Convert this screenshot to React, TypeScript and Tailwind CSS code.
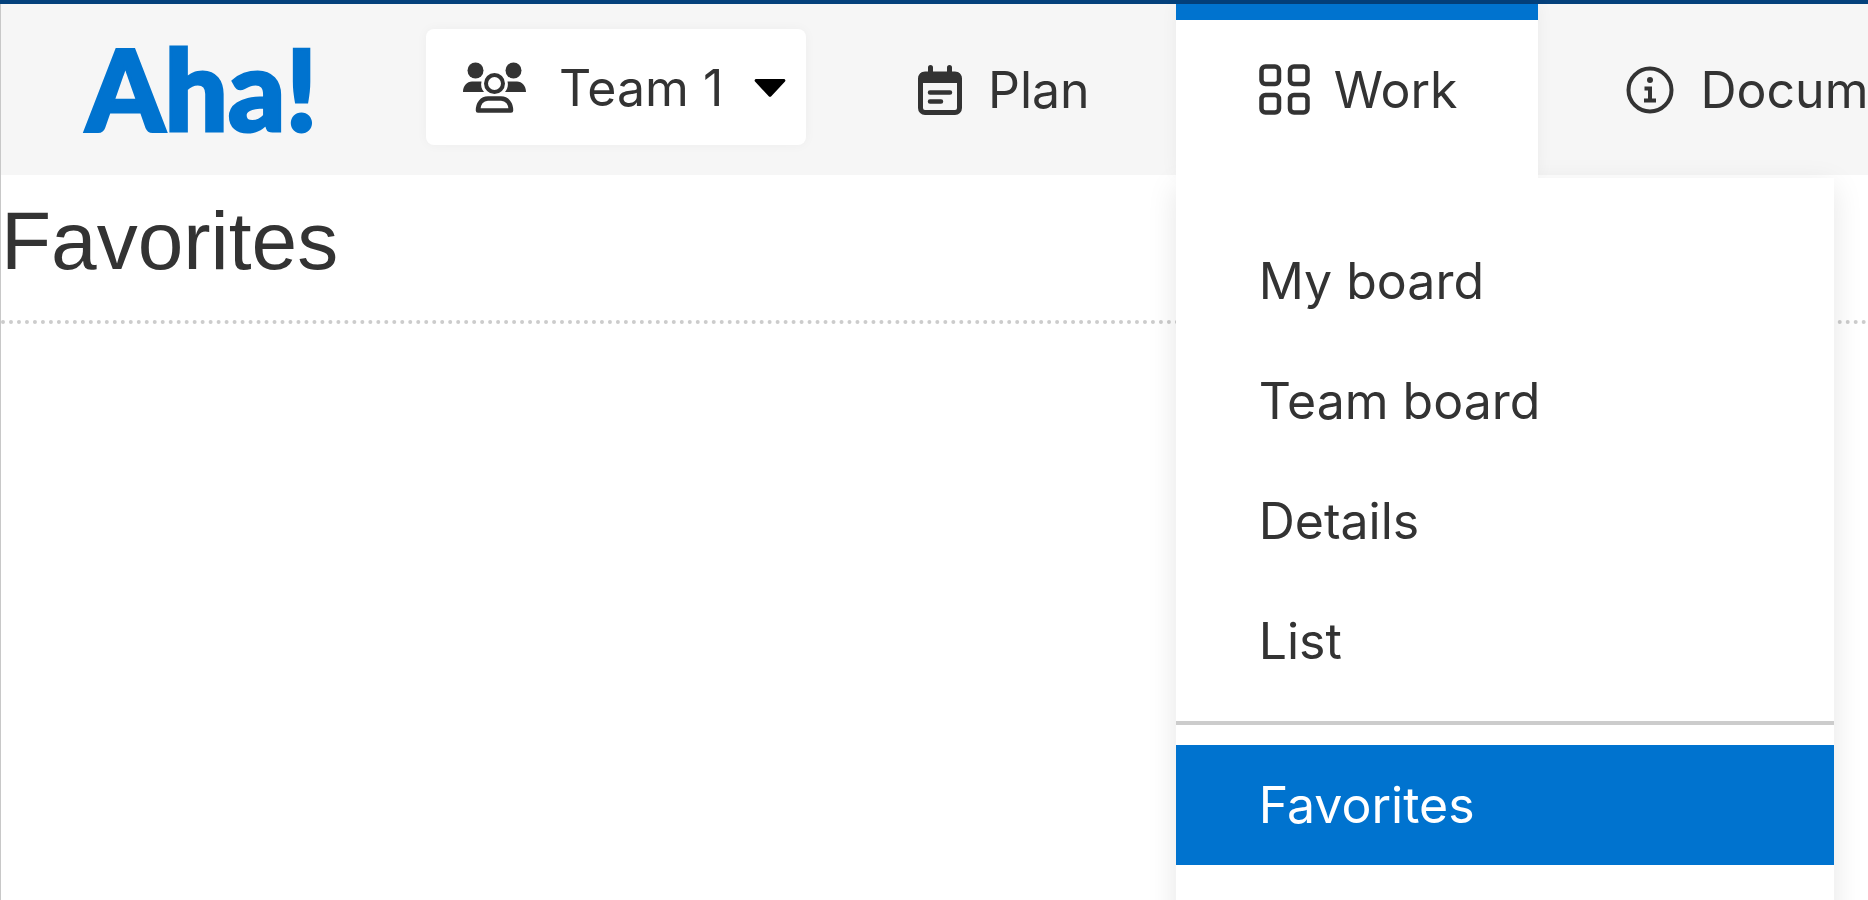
import { useState } from "react"
import type { ReactNode } from "react"

type MenuItem = {
  id: string
  label: string
}

const boardItems: MenuItem[] = [
  { id: "my-board", label: "My board" },
  { id: "team-board", label: "Team board" },
  { id: "details", label: "Details" },
  { id: "list", label: "List" },
]

const savedItems: MenuItem[] = [{ id: "favorites", label: "Favorites" }]

function TeamIcon() {
  return (
    <svg aria-hidden width="64" height="52" viewBox="0 0 64 52" fill="currentColor">
      <circle cx="12.5" cy="8.5" r="8" />
      <circle cx="50.5" cy="8.5" r="8" />
      <path d="M0 30c0-6 4-10.500 9-10.500h9.500c-1 4 0 7.500 2.500 10.500z" />
      <path d="M63 30c0-6-4-10.500-9-10.500h-9.500c1 4 0 7.500-2.500 10.500z" />
      <circle cx="31.500" cy="21.500" r="8.500" fill="none" stroke="currentColor" strokeWidth="4" />
      <path
        d="M15 48.500c0-7 4-12 10-12h13c6 0 10 5 10 12z"
        fill="none"
        stroke="currentColor"
        strokeWidth="4.500"
        strokeLinejoin="round"
      />
    </svg>
  )
}

function PlanIcon() {
  return (
    <svg aria-hidden width="44" height="50" viewBox="0 0 44 50" fill="none" stroke="currentColor">
      <rect x="2.500" y="9" width="39" height="38.500" rx="4.500" strokeWidth="5" />
      <path d="M1 18v-6a5 5 0 0 1 5-5h32a5 5 0 0 1 5 5v6z" fill="currentColor" stroke="none" />
      <path d="M12.500 2.500v6M31.500 2.500v6" strokeWidth="5" strokeLinecap="round" />
      <path d="M12 27.500h20M12 36.500h11" strokeWidth="4.500" strokeLinecap="round" />
    </svg>
  )
}

function WorkIcon() {
  return (
    <svg aria-hidden width="51" height="51" viewBox="0 0 51 51" fill="none" stroke="currentColor" strokeWidth="4.500">
      <rect x="2.500" y="2.500" width="17.500" height="17.500" rx="4" />
      <rect x="31" y="2.500" width="17.500" height="17.500" rx="4" />
      <rect x="2.500" y="31" width="17.500" height="17.500" rx="4" />
      <rect x="31" y="31" width="17.500" height="17.500" rx="4" />
    </svg>
  )
}

function InfoIcon() {
  return (
    <svg aria-hidden width="48" height="48" viewBox="0 0 48 48" fill="none" stroke="currentColor" strokeWidth="4">
      <circle cx="24" cy="24" r="21.500" />
      <circle cx="24" cy="14" r="3" fill="currentColor" stroke="none" />
      <path d="M18.500 22.500h5.500v12M18 34.500h12" />
    </svg>
  )
}

function NavTab({ icon, label }: { icon: ReactNode; label: string }) {
  return (
    <button type="button" className="flex shrink-0 items-center gap-[26px] pr-[86px] pl-[88px]">
      {icon}
      {label}
    </button>
  )
}

export default function App() {
  const [open, setOpen] = useState(true)
  const [selected, setSelected] = useState("favorites")

  const renderItem = (item: MenuItem) => (
    <li key={item.id}>
      <button
        type="button"
        onClick={() => setSelected(item.id)}
        className={
          item.id === selected
            ? "flex h-30 w-full items-center bg-[#0073cf] px-[83px] text-white"
            : "flex h-30 w-full items-center px-[83px]"
        }
      >
        {item.label}
      </button>
    </li>
  )

  return (
    <div className="flex h-screen flex-col overflow-hidden bg-white font-['Inter',sans-serif] text-[50px] leading-[60px] text-[#333333]">
      <div className="h-1 shrink-0 bg-[#04417c]" />

      <div className="flex-1 border-l border-[#c8c8c8]">
        <header className="flex h-[171px] bg-[#f6f6f6]">
          <a
            href="#home"
            className="flex w-[425px] shrink-0 items-center pb-1 pl-[85px] font-['Lato',sans-serif] text-[112px] leading-none font-black text-[#0073cf] [-webkit-text-stroke:3px_#0073cf]"
          >
            Aha!
          </a>

          <button
            type="button"
            className="mt-[25px] flex h-[116px] w-[380px] shrink-0 items-center rounded-lg bg-white pt-0.5 pr-5 pl-[37px] shadow-[0_0_12px_rgba(0,0,0,0.04)]"
          >
            <TeamIcon />
            <span className="ml-8">Team 1</span>
            <svg aria-hidden width="32" height="18" viewBox="0 0 32 18" className="ml-auto" fill="#000">
              <path d="M2 0h28a1.500 1.500 0 0 1 1 2.500L17.500 17a2 2 0 0 1-3 0L1 2.500A1.500 1.500 0 0 1 2 0z" />
            </svg>
          </button>

          <nav className="ml-6 flex">
            <NavTab icon={<PlanIcon />} label="Plan" />

            <div className="relative shrink-0 shadow-[0_0_16px_rgba(0,0,0,0.05)]">
              <button
                type="button"
                aria-expanded={open}
                onClick={() => setOpen(!open)}
                className="relative z-20 flex h-[175px] items-center gap-6 border-t-16 border-[#0073cf] bg-white pr-[81px] pb-5 pl-[83px]"
              >
                <WorkIcon />
                Work
              </button>
              {open && (
                <div className="absolute top-[174px] left-0 z-10 w-[658px] bg-white pt-[43px] pb-16 shadow-[0_8px_28px_rgba(0,0,0,0.1)]">
                  <ul>{boardItems.map(renderItem)}</ul>
                  <hr className="my-5 border-t-4 border-[#cccccc]" />
                  <ul>{savedItems.map(renderItem)}</ul>
                </div>
              )}
            </div>

            <NavTab icon={<InfoIcon />} label="Documents" />
          </nav>
        </header>

        <main>
          <h1 className="border-b-4 border-dotted border-[#cccccc] pt-[18px] pb-8 font-['Liberation_Sans',sans-serif] text-[82px] leading-[95px]">
            Favorites
          </h1>
        </main>
      </div>
    </div>
  )
}
